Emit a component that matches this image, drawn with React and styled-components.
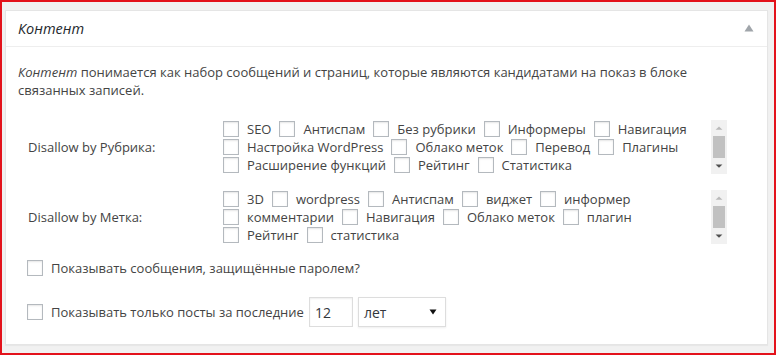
import React from "react";
import styled, { createGlobalStyle } from "styled-components";

const GlobalStyle = createGlobalStyle`
  html, body {
    margin: 0;
    padding: 0;
  }
  body {
    font-family: "Open Sans", "Liberation Sans", sans-serif;
    font-size: 13px;
    color: #444;
  }
`;

const categories = [
  ["SEO", "Антиспам", "Без рубрики", "Информеры", "Навигация"],
  ["Настройка WordPress", "Облако меток", "Перевод", "Плагины"],
  ["Расширение функций", "Рейтинг", "Статистика"],
];

const tags = [
  ["3D", "wordpress", "Антиспам", "виджет", "информер"],
  ["комментарии", "Навигация", "Облако меток", "плагин"],
  ["Рейтинг", "статистика"],
];

function ScrollBar() {
  return (
    <Scroll>
      <svg width="16" height="16" viewBox="0 0 16 16">
        <path d="M4.5 10 L8 6.5 L11.5 10 Z" fill="#b9b9b9" />
      </svg>
      <div className="thumb" />
      <svg width="16" height="16" viewBox="0 0 16 16">
        <path d="M4.5 6.5 L8 10 L11.5 6.5 Z" fill="#505050" />
      </svg>
    </Scroll>
  );
}

function TermList({ label, rows }) {
  return (
    <FieldRow>
      <FieldLabel>{label}</FieldLabel>
      <ListBox>
        <Lines>
          {rows.map((row, i) => (
            <Line key={i}>
              {row.map((name) => (
                <Term key={name}>
                  <Box type="checkbox" />
                  {name}
                </Term>
              ))}
            </Line>
          ))}
        </Lines>
        <ScrollBar />
      </ListBox>
    </FieldRow>
  );
}

export default function App() {
  return (
    <Page>
      <GlobalStyle />
      <PostBox>
        <Header>
          <h2>Контент</h2>
          <Toggle>
            <svg width="10" height="8" viewBox="0 0 10 8">
              <path d="M0.5 7.5 L5 0.5 L9.5 7.5 Z" fill="#a0a5aa" />
            </svg>
          </Toggle>
        </Header>
        <Inside>
          <Intro>
            <em>Контент</em>{" "}понимается как набор сообщений и страниц, которые являются кандидатами на показ в блоке связанных записей.
          </Intro>
          <Fields>
            <TermList label="Disallow by Рубрика:" rows={categories} />
            <TermList label="Disallow by Метка:" rows={tags} />
          </Fields>
          <Option className="first">
            <Box type="checkbox" />
            Показывать сообщения, защищённые паролем?
          </Option>
          <Option>
            <Box type="checkbox" />
            Показывать только посты за последние
            <NumberInput type="text" defaultValue="12" />
            <Select>
              <span>лет</span>
              <svg width="8" height="6" viewBox="0 0 8 6">
                <path d="M0.5 0.5 L7.5 0.5 L4 5.5 Z" fill="#111" />
              </svg>
            </Select>
          </Option>
        </Inside>
      </PostBox>
    </Page>
  );
}

const Page = styled.div`
  box-sizing: border-box;
  height: 355px;
  width: 776px;
  background: #f1f1f1;
  border: 2px solid #e3121b;
  padding: 8px 6px 0 3px;
`;

const PostBox = styled.div`
  box-sizing: border-box;
  width: 763px;
  height: 335px;
  background: #fff;
  border: 1px solid #e5e5e5;
  box-shadow: 0 1px 1px rgba(0, 0, 0, 0.04);
`;

const Header = styled.div`
  height: 35px;
  border-bottom: 1px solid #eee;
  display: flex;
  align-items: center;
  padding: 0 12px;
  h2 {
    margin: 0;
    flex: 1;
    font-size: 14.5px;
    font-weight: 400;
    font-style: italic;
    color: #23282d;
  }
`;

const Toggle = styled.span`
  display: flex;
  align-items: center;
  margin-right: 1px;
  margin-top: -1px;
`;

const Inside = styled.div`
  padding: 16px 12px 0;
`;

const Intro = styled.p`
  margin: 0;
  line-height: 18px;
  em {
    font-style: italic;
  }
`;

const Fields = styled.div`
  display: flex;
  flex-direction: column;
  gap: 16px;
  margin-top: 21px;
`;

const FieldRow = styled.div`
  display: grid;
  grid-template-columns: 205px 1fr;
  align-items: center;
`;

const FieldLabel = styled.div`
  padding-left: 10px;
  color: #444;
`;

const ListBox = styled.div`
  display: flex;
  align-items: stretch;
  height: 54px;
  width: 504px;
`;

const Lines = styled.div`
  flex: 1;
  overflow: hidden;
`;

const Line = styled.div`
  display: flex;
  height: 18px;
  align-items: center;
  white-space: nowrap;
`;

const Term = styled.label`
  display: inline-flex;
  align-items: center;
  margin-right: 8px;
  color: #444;
`;

const Box = styled.input`
  appearance: none;
  box-sizing: border-box;
  width: 16px;
  height: 16px;
  margin: 0 8px 0 0;
  border: 1px solid #b4b9be;
  background: #fff;
  box-shadow: inset 0 1px 2px rgba(0, 0, 0, 0.1);
  flex: none;
`;

const Scroll = styled.div`
  width: 16px;
  background: #f1f1f1;
  display: flex;
  flex-direction: column;
  .thumb {
    height: 23px;
    margin: 0 2px;
    background: #c1c1c1;
  }
  svg {
    display: block;
  }
  svg:last-child {
    margin-top: auto;
  }
`;

const Option = styled.div`
  display: flex;
  align-items: center;
  margin-left: 9px;
  margin-top: 20px;
  &.first {
    margin-top: 15px;
  }
`;

const NumberInput = styled.input`
  box-sizing: border-box;
  width: 44px;
  height: 30px;
  margin-left: 5px;
  padding: 0 5px;
  border: 1px solid #ddd;
  box-shadow: inset 0 1px 2px rgba(0, 0, 0, 0.07);
  font: inherit;
  font-size: 14px;
  color: #32373c;
  outline: none;
`;

const Select = styled.div`
  box-sizing: border-box;
  width: 88px;
  height: 30px;
  margin-left: 5px;
  padding: 0 8px 0 5px;
  border: 1px solid #ddd;
  box-shadow: 0 1px 2px rgba(0, 0, 0, 0.07);
  display: flex;
  align-items: center;
  justify-content: space-between;
  font-size: 14px;
  color: #32373c;
`;
